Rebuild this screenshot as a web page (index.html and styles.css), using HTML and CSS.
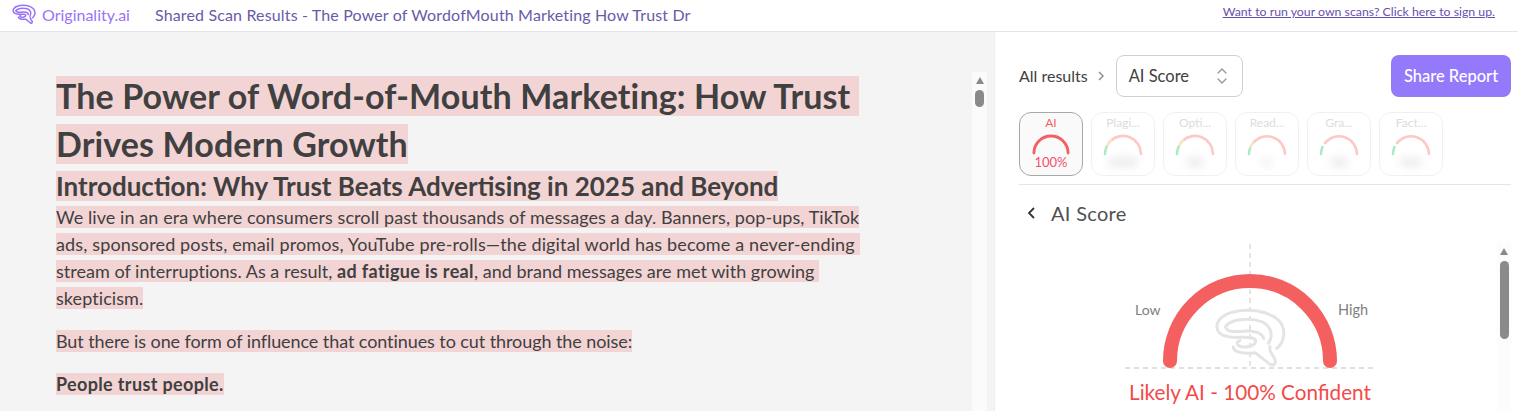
FILE: index.html
```html
<!DOCTYPE html>
<html lang="en">
<head>
<meta charset="utf-8">
<title>Shared Scan Results</title>
<link rel="stylesheet" href="styles.css">
</head>
<body>
<header class="topbar">
  <div class="brand">
    <svg class="brand-icon" viewBox="25 5 230 190" fill="none" stroke="#9b72f8" stroke-width="14" stroke-linecap="round" stroke-linejoin="round">
      <path d="M215 130C240 110 245 70 220 45C190 18 130 8 80 22C45 32 30 55 38 75C45 95 75 98 105 97C130 96 152 98 152 108C152 122 125 128 110 125C95 122 92 112 105 107"/>
      <path d="M62 66C70 45 130 35 170 50C200 62 205 95 190 115"/>
      <path d="M62 66C65 84 95 80 125 78C150 76 172 85 176 100"/>
      <path d="M85 125C85 140 110 148 150 143L195 178C210 185 215 170 208 160C200 145 190 135 195 125"/>
    </svg>
    <span>Originality.ai</span>
  </div>
  <div class="doc-title">Shared Scan Results - The Power of WordofMouth Marketing How Trust Dr</div>
  <a class="signup" href="#">Want to run your own scans? Click here to sign up.</a>
</header>
<main class="panes">
  <section class="doc">
    <article class="doc-body">
      <h1><span class="hl">The Power of Word-of-Mouth Marketing: How Trust&nbsp;</span><span class="hl">Drives Modern Growth</span></h1>
      <h2><span class="hl">Introduction: Why Trust Beats Advertising in 2025 and Beyond</span></h2>
      <p class="para"><span class="hl">We live in an era where consumers scroll past thousands of messages a day. Banners, pop-ups, TikTok</span><span class="hl loose">ads, sponsored posts, email promos, YouTube pre-rolls—the digital world has become a never-ending&nbsp;</span><span class="hl tight">stream of interruptions. As a result, <strong>ad fatigue is real</strong>, and brand messages are met with growing&nbsp;</span><span class="hl">skepticism.</span></p>
      <p class="para"><span class="hl tighter">But there is one form of influence that continues to cut through the noise:</span></p>
      <p class="para"><span class="hl"><strong>People trust people.</strong></span></p>
    </article>
    <div class="track doc-track"><i class="arrow"></i><i class="thumb"></i></div>
  </section>
  <aside class="side">
    <div class="toolbar">
      <span class="crumb">All results</span>
      <svg class="crumb-chev" viewBox="0 0 8 12" fill="none" stroke="#8a8a8a" stroke-width="1.400"><path d="M2 2l4 4-4 4"/></svg>
      <div class="select"><span>AI Score</span>
        <svg viewBox="0 0 12 20" fill="none" stroke="#9a9a9a" stroke-width="1.400" stroke-linecap="round" stroke-linejoin="round"><path d="M2 7l4-4 4 4M2 13l4 4 4-4"/></svg>
      </div>
      <button class="share">Share Report</button>
    </div>
    <div class="tabs">
      <div class="tab active">
        <span class="tab-name">AI</span>
        <svg class="mini mini-active" viewBox="0 0 40 22" fill="none" stroke="#f46060" stroke-width="3" stroke-linecap="round"><path d="M2 20a18 18 0 0 1 36 0"/></svg>
        <span class="tab-val">100%</span>
      </div>
      <div class="tab dim">
        <span class="tab-name">Plagi...</span>
        <svg class="mini" viewBox="0 0 40 22" fill="none" stroke-width="2.600" stroke-linecap="round"><path stroke="#fdc9c6" d="M8 6.500a18 18 0 0 1 30 13.500"/><path stroke="#fbe3c6" d="M3.500 13a18 18 0 0 1 4.500-6.500"/><path stroke="#aeeac6" d="M2 20a18 18 0 0 1 1.500-7"/></svg>
        <span class="blur w40"></span>
      </div>
      <div class="tab dim">
        <span class="tab-name">Opti...</span>
        <svg class="mini" viewBox="0 0 40 22" fill="none" stroke-width="2.600" stroke-linecap="round"><path stroke="#fdc9c6" d="M8 6.500a18 18 0 0 1 30 13.500"/><path stroke="#fbe3c6" d="M3.500 13a18 18 0 0 1 4.500-6.500"/><path stroke="#aeeac6" d="M2 20a18 18 0 0 1 1.500-7"/></svg>
        <span class="blur w24"></span>
      </div>
      <div class="tab dim">
        <span class="tab-name">Read...</span>
        <svg class="mini" viewBox="0 0 40 22" fill="none" stroke-width="2.600" stroke-linecap="round"><path stroke="#fdc9c6" d="M6 9a18 18 0 0 1 32 11"/><path stroke="#aeeac6" d="M2 20a18 18 0 0 1 1.500-7"/><path stroke="#fbe3c6" d="M3.500 13a18 18 0 0 1 2.500-4"/></svg>
        <span class="blur w12"></span>
      </div>
      <div class="tab dim">
        <span class="tab-name">Gra...</span>
        <svg class="mini" viewBox="0 0 40 22" fill="none" stroke-width="2.600" stroke-linecap="round"><path stroke="#fdc9c6" d="M6 9a18 18 0 0 1 32 11"/><path stroke="#aeeac6" d="M2 20a18 18 0 0 1 1.500-7"/></svg>
        <span class="blur w24"></span>
      </div>
      <div class="tab dim">
        <span class="tab-name">Fact...</span>
        <svg class="mini" viewBox="0 0 40 22" fill="none" stroke-width="2.600" stroke-linecap="round"><path stroke="#fdc9c6" d="M6 9a18 18 0 0 1 32 11"/><path stroke="#aeeac6" d="M2 20a18 18 0 0 1 1.500-7"/></svg>
        <span class="blur w28"></span>
      </div>
    </div>
    <div class="score-head">
      <svg viewBox="0 0 10 14" fill="none" stroke="#333" stroke-width="1.800"><path d="M8 2L3 7l5 5"/></svg>
      <span>AI Score</span>
    </div>
    <div class="score-body">
      <div class="gauge">
        <svg class="gauge-svg" viewBox="0 0 250 150" fill="none">
          <path d="M125 0V124M0 124H250" stroke="#d6d6d6" stroke-width="1.300" stroke-dasharray="5 4"/>
          <path d="M45 117a80 80 0 0 1 160 0" stroke="#f46060" stroke-width="14" stroke-linecap="round"/>
          <g transform="translate(80 61) scale(.3333)" stroke="#e4e4e4" stroke-width="9" stroke-linecap="round" stroke-linejoin="round">
            <path d="M215 130C240 110 245 70 220 45C190 18 130 8 80 22C45 32 30 55 38 75C45 95 75 98 105 97C130 96 152 98 152 108C152 122 125 128 110 125C95 122 92 112 105 107"/>
            <path d="M62 66C70 45 130 35 170 50C200 62 205 95 190 115"/>
            <path d="M62 66C65 84 95 80 125 78C150 76 172 85 176 100"/>
            <path d="M85 125C85 140 110 148 150 143L195 178C210 185 215 170 208 160C200 145 190 135 195 125"/>
          </g>
        </svg>
        <span class="gauge-low">Low</span>
        <span class="gauge-high">High</span>
        <div class="verdict">Likely AI - 100% Confident</div>
      </div>
      <div class="track side-track"><i class="arrow"></i><i class="thumb"></i></div>
    </div>
  </aside>
</main>
</body>
</html>
```
FILE: styles.css
```css
* { box-sizing: border-box; }
html, body { margin: 0; height: 100%; overflow: hidden; }
body { font-family: "Lato", "Liberation Sans", sans-serif; color: #404040; background: #fff; display: flex; flex-direction: column; }

.topbar { height: 32px; flex: none; display: flex; align-items: center; padding: 0 23px 2px 12px; border-bottom: 1px solid #e6e4f0; background: #fff; }
.brand { display: flex; align-items: center; gap: 5px; color: #9b72f8; font-size: 16px; }
.brand-icon { width: 25px; height: 21px; }
.doc-title { margin-left: 25px; color: #6a5aa8; font-size: 16px; letter-spacing: .15px; }
.signup { margin-left: auto; margin-bottom: 6px; color: #6a4fb0; font-size: 12.300px; text-decoration: underline; }

.panes { flex: 1; display: flex; min-height: 0; }
.doc { width: 995px; flex: none; background: #f4f4f4; display: flex; overflow: hidden; border-right: 1px solid #eee; }
.doc-body { width: 972px; flex: none; padding: 44px 0 0 56px; overflow: hidden; }
.hl { display: block; width: fit-content; background: #f3d4d4; white-space: pre-wrap; }
h1 { margin: 0; font-size: 34px; font-weight: 700; letter-spacing: .13px; }
h1 .hl { height: 40px; line-height: 40px; margin-bottom: 8px; }
h2 { margin: -1px 0 0; font-size: 26px; font-weight: 700; }
h2 .hl { height: 30px; line-height: 30px; }
.para { margin: 0 0 21px; font-size: 18px; font-weight: 400; letter-spacing: .08px; }
h2 + .para { margin-top: 5px; }
.para .hl { height: 22px; line-height: 22px; margin-bottom: 5px; }
.para .tight { letter-spacing: .02px; }
.para .tighter { letter-spacing: -.08px; }
.para .loose { letter-spacing: .14px; }
.para strong { font-weight: 700; letter-spacing: .35px; }

.track { flex: none; width: 15px; background: #fbfbfb; display: flex; flex-direction: column; align-items: center; }
.doc-track { margin-top: 40px; height: 339px; }
.arrow { width: 0; height: 0; margin-top: 5px; border: 4.500px solid transparent; border-top: 0; border-bottom: 7px solid #8a8a8a; }
.thumb { width: 9px; border-radius: 5px; background: #8a8a8a; margin-top: 6px; height: 17px; }

.side { flex: 1; min-width: 0; padding: 23px 7px 0 24px; display: flex; flex-direction: column; }
.toolbar { display: flex; align-items: center; height: 42px; flex: none; }
.crumb { font-size: 16px; margin-top: -1px; }
.crumb-chev { width: 8px; height: 12px; margin-left: 9px; }
.select { width: 127px; height: 42px; margin-left: 11px; padding: 0 14px 0 12px; border: 1px solid #cfcfcf; border-radius: 8px; display: flex; align-items: center; justify-content: space-between; font-size: 16.500px; }
.select svg { width: 12px; height: 20px; }
.share { margin-left: auto; width: 120px; height: 42px; border: 0; border-radius: 8px; background: #9479fb; color: #fff; font: 500 16.500px "Lato", sans-serif; }

.tabs { display: flex; gap: 8px; margin-top: 15px; padding-bottom: 8px; border-bottom: 1px solid #e6e6e6; flex: none; }
.tab { width: 64px; height: 64px; border: 1px solid #f0f0f0; border-radius: 12px; display: flex; flex-direction: column; align-items: center; }
.tab.active { border-color: #a8a8a8; background: #fafafa; }
.tab-name { font-size: 12px; line-height: 16px; margin-top: 2px; color: #f46060; }
.dim .tab-name { color: #dcdcdc; }
.mini { width: 40px; height: 22px; margin-top: 3px; }
.mini-active { width: 38px; height: 21px; }
.tab-val { font-size: 13px; line-height: 14px; color: #f4506a; }
.blur { height: 10px; margin-top: 1px; border-radius: 6px; background: #ededed; filter: blur(4px); }
.w40 { width: 30px; } .w28 { width: 22px; } .w24 { width: 18px; } .w12 { width: 8px; }

.score-head { display: flex; align-items: center; gap: 15px; margin: 16px 0 0 7px; font-size: 20px; color: #505050; letter-spacing: .3px; flex: none; }
.score-head svg { width: 10px; height: 14px; }
.score-body { flex: 1; min-height: 0; display: flex; margin-top: 18px; }
.gauge { width: 478px; flex: none; position: relative; margin-top: 1px; }
.gauge-svg { display: block; width: 250px; height: 150px; margin-left: 106px; }
.gauge-low { position: absolute; left: 116px; top: 57px; font-size: 14px; color: #808080; }
.gauge-high { position: absolute; left: 319px; top: 57px; font-size: 14.500px; color: #808080; }
.verdict { position: absolute; left: 0; width: 462px; text-align: center; top: 136px; font-size: 20.700px; color: #f44a4a; }
.side-track { width: 14px; background: #fcfcfc; }
.side-track .thumb { height: 78px; }
```
